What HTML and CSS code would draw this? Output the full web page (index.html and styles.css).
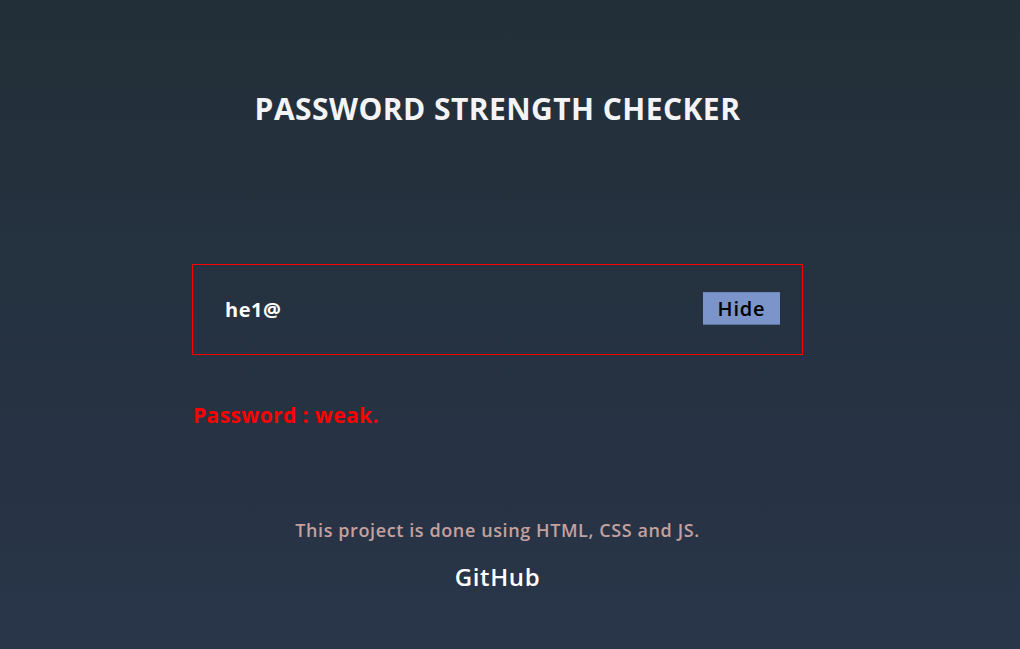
FILE: index.html
```html
<!DOCTYPE html>
<html lang="en">
<head>
<meta charset="utf-8">
<title>Password Strength Checker</title>
<link rel="stylesheet" href="styles.css">
</head>
<body>
<div class="page">
  <h1 class="title">PASSWORD STRENGTH CHECKER</h1>
  <div class="field">
    <input class="pw" type="text" value="he1@">
    <button class="toggle" type="button">Hide</button>
  </div>
  <p class="result">Password : weak.</p>
  <footer class="footer">
    <p class="note">This project is done using HTML, CSS and JS.</p>
    <a class="gh" href="#">GitHub</a>
  </footer>
</div>
</body>
</html>
```

FILE: styles.css
```css
html, body {
  margin: 0;
  height: 100%;
}
body {
  background: linear-gradient(180deg, #222f38 0%, #293549 100%);
  font-family: "Open Sans", "Noto Sans", sans-serif;
  overflow: hidden;
}
.page {
  width: 995px;
  height: 649px;
  display: flex;
  flex-direction: column;
  align-items: center;
}
.title {
  margin: 89px 0 0;
  font-size: 30px;
  font-weight: 700;
  color: #f4f4f6;
  letter-spacing: 0.45px;
  line-height: 40px;
}
.field {
  margin-top: 135px;
  width: 611px;
  height: 91px;
  box-sizing: border-box;
  border: 1px solid #ff0000;
  display: flex;
  align-items: center;
  padding: 0 22px 0 32px;
}
.pw {
  flex: 1;
  background: transparent;
  border: none;
  outline: none;
  color: #ffffff;
  font-family: "Open Sans", sans-serif;
  font-weight: 700;
  font-size: 20px;
  letter-spacing: 0.5px;
  padding: 0;
}
.toggle {
  width: 77px;
  height: 33px;
  background: #7b94c9;
  border: none;
  border-bottom: 1px solid #5f729c;
  border-top: 1px solid #6f86b8;
  font-family: "Open Sans", sans-serif;
  font-weight: 600;
  font-size: 20px;
  letter-spacing: 0.8px;
  color: #000;
  padding: 0;
  margin-bottom: 2px;
}
.result {
  align-self: flex-start;
  margin: 46px 0 0 193px;
  color: #ff0000;
  font-size: 21px;
  font-weight: 700;
  letter-spacing: 0.4px;
  line-height: 28px;
}
.footer {
  margin-top: 88px;
  display: flex;
  flex-direction: column;
  align-items: center;
}
.note {
  margin: 0;
  color: #c4a19f;
  font-size: 18px;
  font-weight: 600;
  letter-spacing: 0.6px;
  line-height: 26px;
}
.gh {
  margin-top: 18px;
  color: #ffffff;
  text-decoration: none;
  font-size: 24px;
  font-weight: 600;
  letter-spacing: 0.6px;
  line-height: 32px;
}
```
